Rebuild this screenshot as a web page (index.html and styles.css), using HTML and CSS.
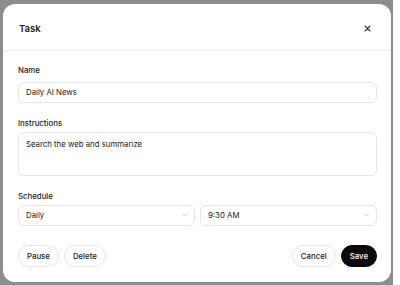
FILE: index.html
```html
<!DOCTYPE html>
<html lang="en">

<head>
    <meta charset="UTF-8">
    <meta name="viewport" content="width=device-width, initial-scale=1.0">
    <title>Task</title>
    <link rel="stylesheet" href="styles.css">
</head>

<body>
    <div class="backdrop">
        <div class="dialog">
            <div class="dialog-header">
                <h2>Task</h2>
                <button class="close-btn" aria-label="Close">
                    <svg width="7" height="7" viewBox="0 0 7 7">
                        <path d="M1 1 L6 6 M6 1 L1 6" stroke="#333" stroke-width="1.1" stroke-linecap="round"/>
                    </svg>
                </button>
            </div>

            <form class="dialog-body">
                <div class="form-group">
                    <label for="name">Name</label>
                    <input type="text" id="name" value="Daily AI News">
                </div>
                <div class="form-group">
                    <label for="instructions">Instructions</label>
                    <textarea id="instructions">Search the web and summarize</textarea>
                </div>
                <div class="form-group">
                    <label>Schedule</label>
                    <div class="schedule-row">
                        <div class="select">
                            <span>Daily</span>
                            <svg width="7" height="4" viewBox="0 0 7 4"><path d="M1 0.5 L3.5 3 L6 0.5" fill="none" stroke="#c2c2c2" stroke-width="0.8"/></svg>
                        </div>
                        <div class="select">
                            <span>9:30 AM</span>
                            <svg width="7" height="4" viewBox="0 0 7 4"><path d="M1 0.5 L3.5 3 L6 0.5" fill="none" stroke="#c2c2c2" stroke-width="0.8"/></svg>
                        </div>
                    </div>
                </div>

                <div class="actions">
                    <div class="actions-left">
                        <button type="button" class="pill-btn">Pause</button>
                        <button type="button" class="pill-btn">Delete</button>
                    </div>
                    <div class="actions-right">
                        <button type="button" class="pill-btn">Cancel</button>
                        <button type="submit" class="pill-btn save-btn">Save</button>
                    </div>
                </div>
            </form>
        </div>
    </div>
</body>
</html>
```

FILE: styles.css
```css
body {
    font-family: Inter, "Noto Sans", sans-serif;
    background-color: #fff;
    color: #222;
    margin: 0;
    padding: 0;
}

.backdrop {
    width: 393px;
    height: 285px;
    box-sizing: border-box;
    padding: 4px 2px 3px 3px;
    background-color: #8d8d8d;
}

.dialog {
    height: 100%;
    background-color: #fff;
    border-radius: 12px;
    display: flex;
    flex-direction: column;
}

.dialog-header {
    height: 47px;
    display: flex;
    align-items: center;
    justify-content: space-between;
    padding: 2px 20px 0 16px;
    box-sizing: border-box;
    border-bottom: 1px solid #eeeeee;
}

h2 {
    margin: 0;
    font-size: 9.5px;
    font-weight: 600;
}

.close-btn {
    background: none;
    border: none;
    padding: 0;
    display: flex;
    cursor: pointer;
}

.dialog-body {
    flex: 1;
    display: flex;
    flex-direction: column;
    padding: 13px 14px 0 15px;
}

.form-group {
    margin-bottom: 14px;
}

label {
    display: block;
    font-size: 7.8px;
    font-weight: 500;
    line-height: 12px;
    margin-bottom: 3px;
}

input[type="text"],
textarea,
.select {
    width: 100%;
    box-sizing: border-box;
    border: 1px solid #e6e6e6;
    border-radius: 6px;
    background-color: #fff;
    font-family: inherit;
    font-size: 7.8px;
    color: #222;
    padding: 0 7px;
}

input[type="text"] {
    height: 21px;
}

textarea {
    height: 44px;
    padding-top: 6px;
    resize: none;
    display: block;
}

.schedule-row {
    display: flex;
    gap: 5px;
}

.select {
    height: 21px;
    display: flex;
    align-items: center;
    justify-content: space-between;
    padding-right: 6px;
}

.actions {
    display: flex;
    justify-content: space-between;
    margin-top: 5px;
}

.actions-left,
.actions-right {
    display: flex;
    gap: 5px;
}

.pill-btn {
    height: 22px;
    padding: 0 8px;
    border: 1px solid #e6e6e6;
    border-radius: 11px;
    background-color: #fff;
    font-family: inherit;
    font-size: 7.8px;
    font-weight: 500;
    color: #222;
    cursor: pointer;
}

.save-btn {
    background-color: #0a0a0a;
    border-color: #0a0a0a;
    color: #fff;
}
```
